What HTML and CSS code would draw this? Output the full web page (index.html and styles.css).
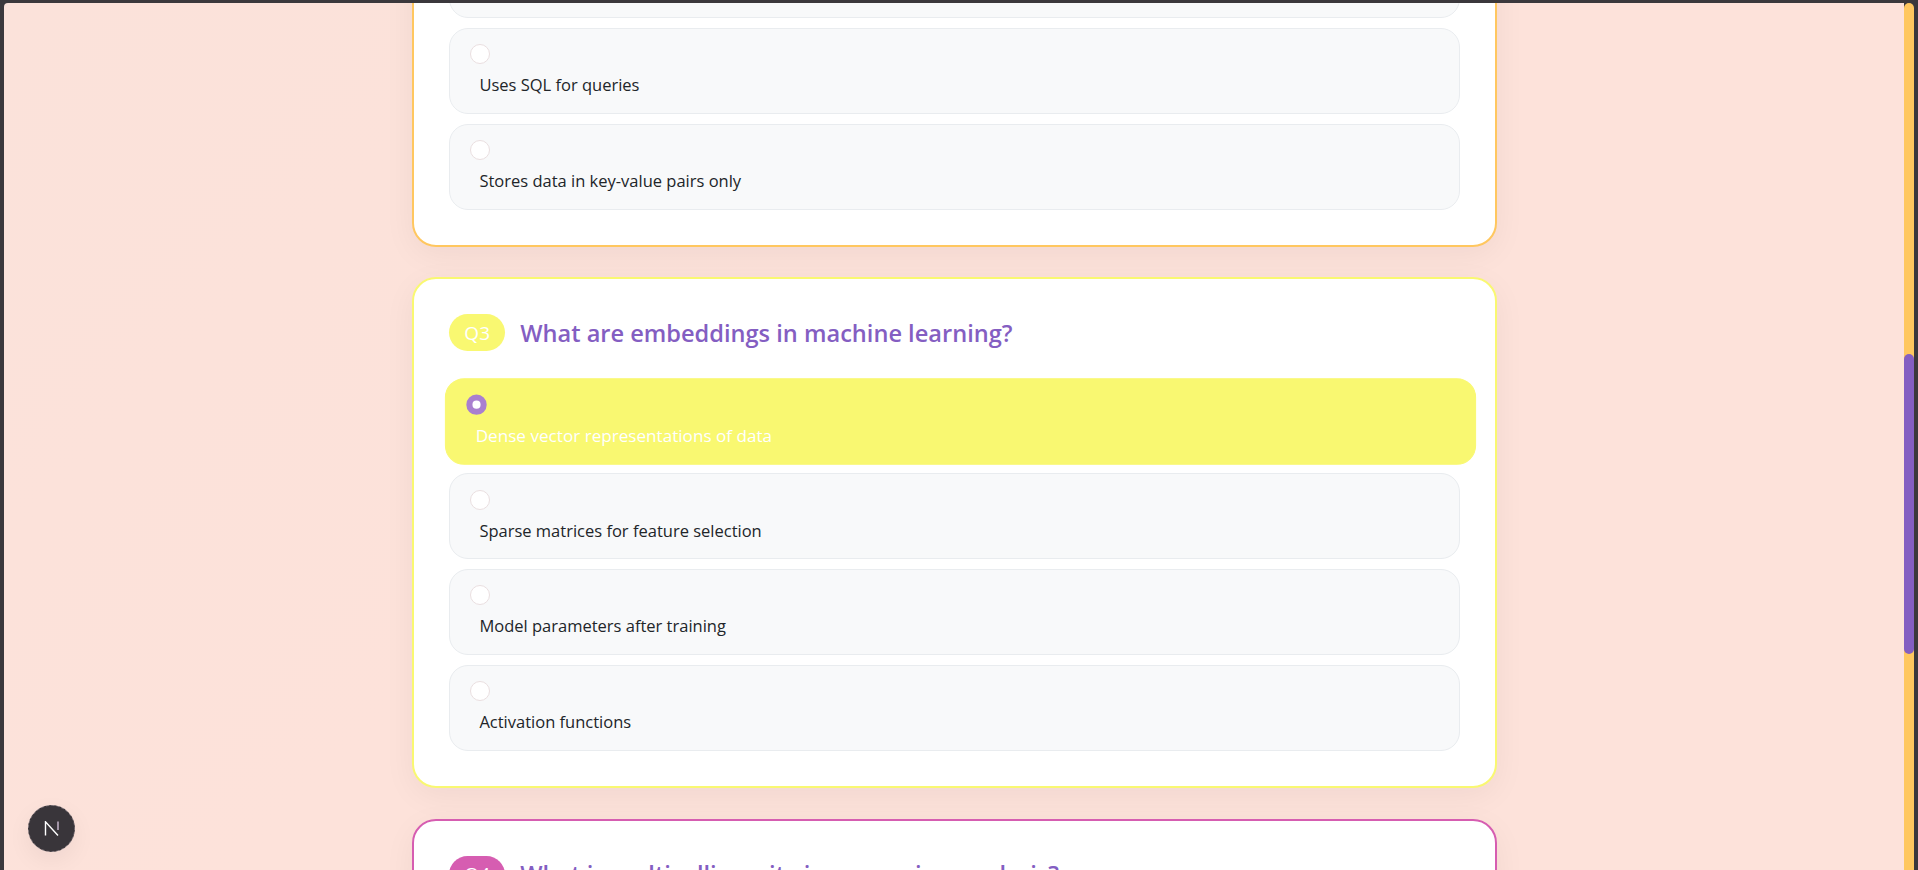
FILE: index.html
```html
<!DOCTYPE html>
<html lang="en">
<head>
<meta charset="utf-8">
<title>Quiz</title>
<link rel="stylesheet" href="styles.css">
</head>
<body>
<div class="frame">
  <main class="viewport">
    <div class="stack">
      <section class="card card--orange card--cut">
        <div class="options">
          <div class="option option--cut"></div>
          <label class="option"><span class="radio"></span><span class="option-text">Uses SQL for queries</span></label>
          <label class="option"><span class="radio"></span><span class="option-text">Stores data in key-value pairs only</span></label>
        </div>
      </section>
      <section class="card card--yellow">
        <header class="card-head"><span class="badge badge--yellow">Q3</span><h2 class="question">What are embeddings in machine learning?</h2></header>
        <div class="options">
          <label class="option option--selected"><span class="radio radio--on"></span><span class="option-text">Dense vector representations of data</span></label>
          <label class="option"><span class="radio"></span><span class="option-text">Sparse matrices for feature selection</span></label>
          <label class="option"><span class="radio"></span><span class="option-text">Model parameters after training</span></label>
          <label class="option"><span class="radio"></span><span class="option-text">Activation functions</span></label>
        </div>
      </section>
      <section class="card card--pink">
        <header class="card-head"><span class="badge badge--pink">Q4</span><h2 class="question">What is multicollinearity in regression analysis?</h2></header>
      </section>
    </div>
    <button class="dev-badge" type="button" aria-label="Next.js dev tools">
      <svg class="dev-n" viewBox="0 0 16 15" width="16" height="15" aria-hidden="true">
        <path d="M1.5 14.5V.8L14 14.5" fill="none" stroke="#fff" stroke-width="1.4"/>
        <path d="M14 .5V9" fill="none" stroke="#d9c8e0" stroke-width="1.3"/>
      </svg>
    </button>
  </main>
  <div class="scrollbar"><div class="scroll-thumb"></div></div>
</div>
</body>
</html>
```
FILE: styles.css
```css
* { box-sizing: border-box; }
html, body { height: 100%; margin: 0; overflow: hidden; background: #3b383c; }
body { font-family: "Open Sans", "Noto Sans", sans-serif; }
.frame { height: 100vh; display: flex; padding: 3px 4px 0; }
.viewport {
  position: relative; flex: 1; min-width: 0; overflow: hidden; padding-left: 1px;
  border-top-left-radius: 4px;
  background: linear-gradient(135deg, #fbe2da 0%, #fde2da 40%, #fde2da 100%);
}
.scrollbar { flex: none; width: 10px; background: #ffc75f; border-radius: 5px 5px 0 0; }
.scroll-thumb { margin-top: 351px; height: 300px; background: #845ec2; border-radius: 5px; }
.stack { width: 1085px; margin: -120px auto 0; display: flex; flex-direction: column; gap: 30.5px; }
.card { flex: none; background: #fff; border: 2px solid; border-radius: 24px; padding: 35.2px; box-shadow: 0 8px 32px rgba(0,0,0,.05); }
.card--cut { padding-top: 47.2px; padding-bottom: 35px; }
.card--orange { border-color: #ffc75f; }
.card--yellow { border-color: #f9f871; }
.card--pink { border-color: #d65db1; }
.card-head { display: flex; align-items: center; gap: 15px; margin-bottom: 26px; }
.badge { flex: none; width: 56px; height: 37px; border-radius: 19px; color: #fff; font-size: 19px; font-weight: 500; display: flex; align-items: center; justify-content: center; }
.badge--yellow { background: #f9f871; }
.badge--pink { background: #d65db1; }
.question { margin: 0; color: #845ec2; font-size: 23.6px; font-weight: 600; line-height: 32px; }
.options { display: flex; flex-direction: column; gap: 9.8px; }
.option { display: block; height: 86px; padding: 15.4px 20.2px; background: #f8f9fa; border: 1px solid #e9ecef; border-radius: 19px; }
.option--selected { height: 85px; margin-bottom: 1px; background: #f9f871; border-color: #f9f871; color: #fff; transform: translate(6px, 2px) scale(1.02); }
.radio { display: block; width: 20px; height: 20px; border-radius: 50%; background: #fff; border: 1px solid #eadfe0; }
.radio--on { border: 6px solid #a97fcf; }
.option-text { display: block; margin: 9px 0 0 9px; font-size: 16.5px; line-height: 24px; color: #212529; }
.option--selected .option-text { color: #fff; font-size: 16.8px; font-weight: 500; }
.dev-badge { position: absolute; left: 24px; bottom: 18px; width: 47px; height: 47px; padding: 0; border-radius: 50%; background: #39353a; border: 1px dashed #6d666d; box-shadow: 0 8px 24px rgba(0,0,0,.06); display: flex; align-items: center; justify-content: center; }
.dev-n { display: block; }
```
